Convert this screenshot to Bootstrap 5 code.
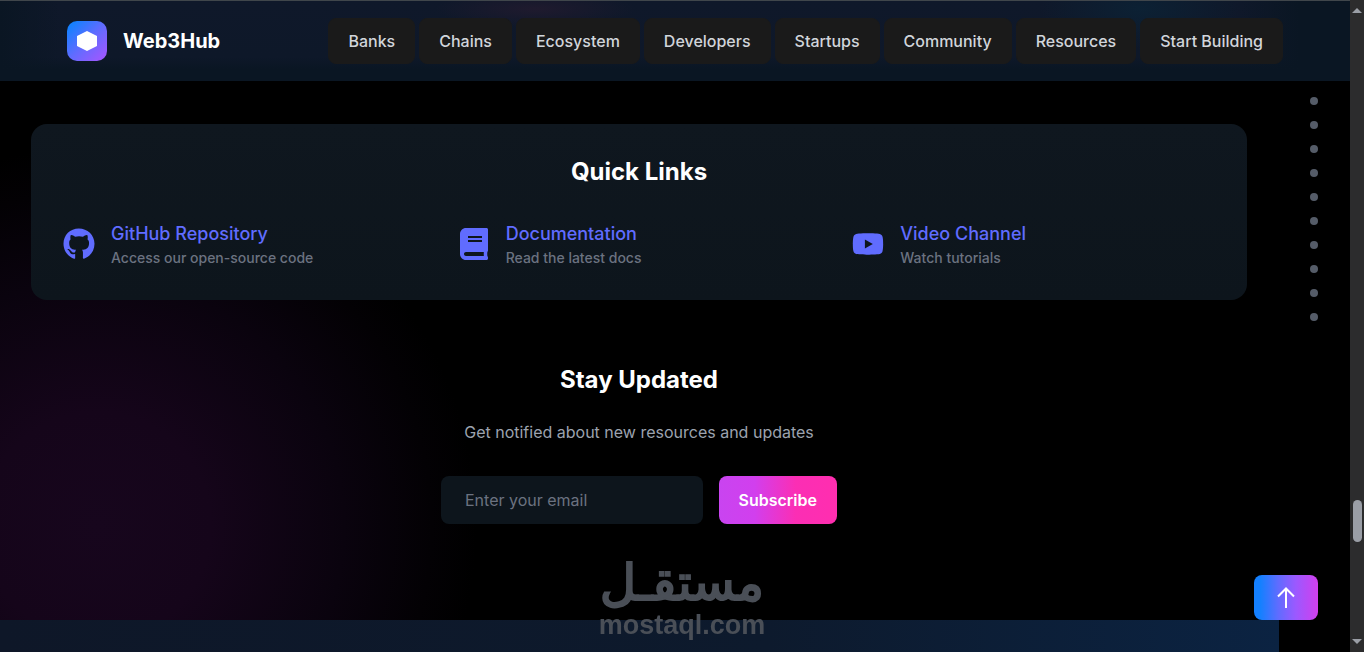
<!DOCTYPE html>
<html lang="en">
<head>
<meta charset="utf-8">
<meta name="viewport" content="width=device-width, initial-scale=1">
<title>Web3Hub</title>
<link href="https://cdn.jsdelivr.net/npm/bootstrap@5.3.0/dist/css/bootstrap.min.css" rel="stylesheet">
<style>
  body { background: #000; color: #fff; font-family: Inter, "Liberation Sans", sans-serif; font-size: 16px; line-height: 24px; }
  .page { padding-right: 14px; }
  .site-header { background: radial-gradient(ellipse 100px 18px at 535px 8px, #1f1a2e, transparent), radial-gradient(ellipse 100px 40px at 1140px 8px, #0c2134, transparent), linear-gradient(90deg, #0a1623, transparent 60px, transparent 1240px, #0a1623 1300px), linear-gradient(#0f182a 0, #0e1829 56px, #0a1623 68px); border-top: 1px solid #40464b; padding: 17px 67px; }
  .logo-box { width: 40px; height: 40px; border-radius: 10px; background: linear-gradient(135deg, #1480ff 10%, #606cff 50%, #9b59ff 90%); }
  .brand-name { font-size: 20px; font-weight: 700; }
  .nav-pill { --bs-btn-color: #d1d5db; --bs-btn-bg: #1a1a1a; --bs-btn-border-color: #1a1a1a; --bs-btn-hover-color: #fff; --bs-btn-hover-bg: #262626; --bs-btn-padding-x: 19px; --bs-btn-padding-y: 10px; --bs-btn-border-radius: 8px; --bs-btn-font-weight: 500; --bs-btn-line-height: 24px; white-space: nowrap; }
  .content-area { margin-right: 71px; padding: 43px 32px 0 31px; background: radial-gradient(circle 380px at 97px 445px, #17061d 0, #15051a 30%, #0a030e 65%, #030104 88%, transparent); }
  .links-panel { background: linear-gradient(#0f171f, #0d151c); border-radius: 16px; padding: 32px; }
  .section-title { font-size: 24px; font-weight: 700; line-height: 32px; }
  .links-row { --bs-gutter-x: 32px; --bs-gutter-y: 0; }
  .quick-icon { width: 32px; height: 32px; fill: #606cff; }
  .quick-link { color: #606cff; font-size: 18px; font-weight: 500; line-height: 28px; }
  .quick-note { color: #6b7280; font-size: 14px; font-weight: 500; line-height: 20px; }
  .updates { padding: 64px 0 96px; }
  .updates-text { color: #9ca3af; }
  .updates-form { max-width: 396px; }
  .email-field, .email-field:focus { background: #0d151c; color: #fff; border: 0; border-radius: 8px; height: 48px; padding: 0 24px; }
  .email-field::placeholder { color: #6b7280; opacity: 1; }
  .subscribe-btn, .subscribe-btn:hover { color: #fff; background: linear-gradient(90deg, #c944f0 0, #d13fee 30%, #fb2eb4 65%, #ff2eaf); border: 0; border-radius: 8px; padding: 0 20px; font-weight: 600; }
  .site-footer { height: 32px; margin-right: 71px; background: linear-gradient(90deg, #0e1728, #0d1a2d 60%, #0b2342); }
  .section-dots { right: 46px; top: 97px; }
  .section-dots a { width: 8px; height: 8px; background: #555c68; border-radius: 50%; }
  .to-top, .to-top:hover { right: 46px; bottom: 32px; width: 64px; height: 45px; border: 0; border-radius: 8px; background: linear-gradient(90deg, #1480ff 10%, #606cff 38%, #9b59ff 65%, #d13fee); }
  .scroll-rail { right: 0; width: 14px; background: #2c2c2d; padding: 8px 0; z-index: 1040; }
  .scroll-thumb { top: 500px; right: 2px; width: 9px; height: 42px; border-radius: 5px; background: #9a9ea6; }
  .watermark { bottom: 12px; left: 50%; transform: translateX(-50%); color: #4a4f57; pointer-events: none; }
  .wm-script { font: 400 50px/54px "DejaVu Sans", sans-serif; -webkit-text-stroke: 2px #4a4f57; }
  .wm-domain { font: 700 27px/30px "Liberation Sans", Arial, sans-serif; }
</style>
</head>
<body>
<div class="page d-flex flex-column min-vh-100">
  <header class="site-header d-flex align-items-center justify-content-between">
    <a href="#" class="d-flex align-items-center gap-3 text-white text-decoration-none">
      <span class="logo-box d-flex align-items-center justify-content-center">
        <svg width="20" height="20" viewBox="0 0 20 20" aria-hidden="true"><path fill="#fff" d="M10 0 20 5v10l-10 5-10-5V5z"/></svg>
      </span>
      <span class="brand-name">Web3Hub</span>
    </a>
    <nav class="d-flex gap-1">
      <button type="button" class="btn nav-pill">Banks</button>
      <button type="button" class="btn nav-pill">Chains</button>
      <button type="button" class="btn nav-pill">Ecosystem</button>
      <button type="button" class="btn nav-pill">Developers</button>
      <button type="button" class="btn nav-pill">Startups</button>
      <button type="button" class="btn nav-pill">Community</button>
      <button type="button" class="btn nav-pill">Resources</button>
      <button type="button" class="btn nav-pill">Start Building</button>
    </nav>
  </header>

  <main class="content-area flex-grow-1">
    <section class="links-panel">
      <h2 class="section-title text-center mb-4 pb-2">Quick Links</h2>
      <div class="row row-cols-3 links-row">
        <div class="col d-flex align-items-center gap-3">
          <svg class="quick-icon flex-shrink-0" viewBox="0 0 496 512" aria-hidden="true"><path d="M165.900 397.400c0 2-2.300 3.600-5.200 3.600-3.300.3-5.600-1.300-5.600-3.600 0-2 2.300-3.600 5.200-3.600 3-.3 5.600 1.300 5.600 3.600zm-31.100-4.500c-.7 2 1.300 4.300 4.300 4.900 2.600 1 5.600 0 6.200-2s-1.300-4.300-4.300-5.200c-2.600-.7-5.500.3-6.200 2.300zm44.200-1.700c-2.900.7-4.900 2.600-4.600 4.900.3 2 2.900 3.300 5.900 2.600 2.900-.7 4.900-2.600 4.600-4.600-.3-1.900-3-3.200-5.900-2.900zM244.800 8C106.100 8 0 113.300 0 252c0 110.900 69.800 205.800 169.500 239.200 12.800 2.300 17.300-5.600 17.300-12.100 0-6.200-.3-40.400-.3-61.400 0 0-70 15-84.700-29.800 0 0-11.400-29.100-27.800-36.600 0 0-22.900-15.700 1.600-15.400 0 0 24.900 2 38.600 25.800 21.900 38.600 58.600 27.500 72.900 20.900 2.300-16 8.800-27.100 16-33.700-55.900-6.200-112.300-14.300-112.300-110.500 0-27.500 7.600-41.300 23.600-58.900-2.600-6.500-11.100-33.300 2.600-67.900 20.900-6.500 69 27 69 27 20-5.600 41.500-8.500 62.800-8.500s42.800 2.900 62.800 8.500c0 0 48.100-33.600 69-27 13.700 34.700 5.200 61.400 2.600 67.900 16 17.700 25.800 31.500 25.800 58.900 0 96.500-58.900 104.200-114.800 110.500 9.200 7.900 17 22.900 17 46.400 0 33.700-.3 75.400-.3 83.600 0 6.500 4.600 14.400 17.300 12.100C428.200 457.800 496 362.900 496 252 496 113.300 383.500 8 244.800 8z"/></svg>
          <div><a href="#" class="quick-link d-block text-decoration-none">GitHub Repository</a><div class="quick-note">Access our open-source code</div></div>
        </div>
        <div class="col d-flex align-items-center gap-3">
          <svg class="quick-icon flex-shrink-0" viewBox="0 0 512 512" aria-hidden="true"><path transform="translate(32)" d="M448 360V24c0-13.300-10.700-24-24-24H96C43 0 0 43 0 96v320c0 53 43 96 96 96h328c13.300 0 24-10.700 24-24v-16c0-7.500-3.500-14.300-8.900-18.700-4.200-15.400-4.200-59.300 0-74.700 5.400-4.300 8.900-11.100 8.900-18.600zM128 134c0-3.300 2.700-6 6-6h212c3.300 0 6 2.700 6 6v20c0 3.300-2.700 6-6 6H134c-3.300 0-6-2.700-6-6v-20zm0 64c0-3.300 2.700-6 6-6h212c3.300 0 6 2.700 6 6v20c0 3.300-2.700 6-6 6H134c-3.300 0-6-2.700-6-6v-20zm253.400 250H96c-17.700 0-32-14.300-32-32 0-17.600 14.400-32 32-32h285.400c-1.900 17.100-1.900 46.900 0 64z"/></svg>
          <div><a href="#" class="quick-link d-block text-decoration-none">Documentation</a><div class="quick-note">Read the latest docs</div></div>
        </div>
        <div class="col d-flex align-items-center gap-3">
          <svg class="quick-icon flex-shrink-0" viewBox="0 0 576 512" aria-hidden="true"><path d="M549.700 124.100c-6.300-23.700-24.800-42.300-48.300-48.600C458.800 64 288 64 288 64S117.200 64 74.600 75.500c-23.500 6.300-42 24.900-48.300 48.600-11.400 42.900-11.400 132.300-11.400 132.300s0 89.400 11.400 132.300c6.300 23.700 24.800 41.500 48.300 47.800C117.200 448 288 448 288 448s170.800 0 213.400-11.500c23.500-6.300 42-24.200 48.300-47.800 11.400-42.900 11.400-132.300 11.400-132.300s0-89.400-11.400-132.300zM232.200 337.600V175.200l142.700 81.200z"/></svg>
          <div><a href="#" class="quick-link d-block text-decoration-none">Video Channel</a><div class="quick-note">Watch tutorials</div></div>
        </div>
      </div>
    </section>

    <section class="updates text-center">
      <h2 class="section-title mb-4">Stay Updated</h2>
      <p class="updates-text mb-4 pb-2">Get notified about new resources and updates</p>
      <form class="updates-form d-flex gap-3 mx-auto">
        <input type="email" class="form-control email-field" placeholder="Enter your email" aria-label="Enter your email">
        <button type="button" class="btn subscribe-btn">Subscribe</button>
      </form>
    </section>
  </main>

  <footer class="site-footer"></footer>
</div>

<nav class="section-dots position-fixed d-flex flex-column gap-3" aria-label="Sections">
  <a href="#"></a><a href="#"></a><a href="#"></a><a href="#"></a><a href="#"></a>
  <a href="#"></a><a href="#"></a><a href="#"></a><a href="#"></a><a href="#"></a>
</nav>

<button type="button" class="btn to-top position-fixed d-flex align-items-center justify-content-center" aria-label="Back to top">
  <svg width="18" height="22" viewBox="0 0 18 22" fill="none" stroke="#fff" stroke-width="2" aria-hidden="true"><path d="M9 21V2M1 9.500 9 1.500l8 8"/></svg>
</button>

<div class="watermark position-fixed d-flex flex-column align-items-center">
  <span class="wm-script" lang="ar" dir="rtl">مستقـل</span>
  <span class="wm-domain">mostaql.com</span>
</div>

<div class="scroll-rail position-fixed top-0 bottom-0 d-flex flex-column justify-content-between align-items-center" aria-hidden="true">
  <svg width="10" height="5" viewBox="0 0 10 5"><path fill="#9a9ea6" d="M5 0l5 5H0z"/></svg>
  <span class="scroll-thumb position-absolute"></span>
  <svg width="10" height="5" viewBox="0 0 10 5"><path fill="#9a9ea6" d="M0 0h10L5 5z"/></svg>
</div>
<script src="https://cdn.jsdelivr.net/npm/bootstrap@5.3.0/dist/js/bootstrap.bundle.min.js"></script>
</body>
</html>
